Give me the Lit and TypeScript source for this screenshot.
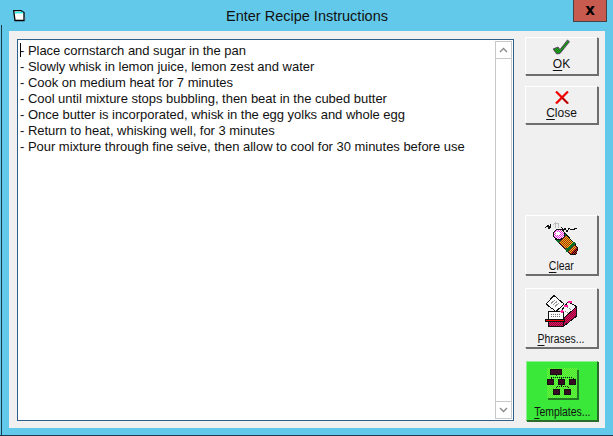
import { LitElement, css, html, svg } from 'lit';
import { customElement } from 'lit/decorators.js';

const STEPS = [
  '- Place cornstarch and sugar in the pan',
  '- Slowly whisk in lemon juice, lemon zest and water',
  '- Cook on medium heat for 7 minutes',
  '- Cool until mixture stops bubbling, then beat in the cubed butter',
  '- Once butter is incorporated, whisk in the egg yolks and whole egg',
  '- Return to heat, whisking well, for 3 minutes',
  '- Pour mixture through fine seive, then allow to cool for 30 minutes before use',
];

// 2x2 checker, the icons are old 16 colour bitmaps
const checker = (id: string, a: string, b: string) => svg`
  <pattern id=${id} width="2" height="2" patternUnits="userSpaceOnUse">
    <rect width="2" height="2" fill=${a}/>
    <rect width="1" height="1" fill=${b}/>
    <rect x="1" y="1" width="1" height="1" fill=${b}/>
  </pattern>`;

const okIcon = svg`<svg class="ico-ok" width="17" height="16" viewBox="0 0 17 16">
  <defs>${checker('okd', '#067a06', '#2aa82a')}</defs>
  <path d="M0 10 L5 8 L7 10.500 L14.500 1 L16.500 2.700 L7 14.500 L3.700 15 Z" fill="url(#okd)" stroke="#5a2a6a" stroke-width="0.8"/>
</svg>`;

const closeIcon = svg`<svg class="ico-close" width="14" height="13" viewBox="0 0 14 13">
  <path d="M1 0.500 L13 12.500" stroke="#f00000" stroke-width="2.200"/>
  <path d="M13 0.500 L1 12.500" stroke="#f00000" stroke-width="2.200"/>
  <path d="M7.500 7 L13 12.500" stroke="#5a1010" stroke-width="1"/>
</svg>`;

const clearIcon = svg`<svg width="33" height="33" viewBox="0 0 33 33" shape-rendering="crispEdges">
  <defs>
    ${checker('clb', '#f2c810', '#a01818')}
    ${checker('clm', '#e820d8', '#ffffff')}
    ${checker('clr', '#d02020', '#101010')}
  </defs>
  <path d="M0 6 L3 3.500 L4 7 L5.500 2.500 L6 6" fill="none" stroke="#111"/>
  <path d="M8 3 L10 1 L10 6 M10 2 L13 1.500 L13 6" fill="none" stroke="#bbb"/>
  <path d="M16.500 5 L18 9 L20 6 L22 10 L23.500 6.500 L27 8 L32 6" fill="none" stroke="#111"/>
  <path d="M20 11 L33 26 L31 32 L25 32 L10 17 Z" fill="url(#clb)" stroke="#111"/>
  <path d="M12 19.500 L20.500 11.500" stroke="#0b6a26" stroke-width="4"/>
  <path d="M21 29 L30 20.500" stroke="#0b6a26" stroke-width="3"/>
  <path d="M26 31.500 L32 26 L31.500 32 Z" fill="url(#clr)"/>
  <ellipse cx="14" cy="12.500" rx="5.600" ry="5.200" fill="url(#clm)" stroke="#111"/>
  <ellipse cx="13" cy="11.500" rx="2" ry="1.500" fill="#fff"/>
</svg>`;

const phrasesIcon = svg`<svg width="33" height="33" viewBox="0 0 33 33" shape-rendering="crispEdges">
  <defs>${checker('phb', '#e8105c', '#8a0a40')}</defs>
  <path d="M1 9 L9 0.500 L19 9 L11 16.500 Z" fill="#fff" stroke="#111"/>
  <path d="M6 8.500 L10 5 M8 10 L12 6.500 M10 11.500 L14 8" stroke="#999"/>
  <path d="M16 16 L23.300 6.700 L31.700 11.700 L20 25 Z" fill="#f4f4f4" stroke="#111"/>
  <path d="M22 12 L27 15 M20 16 L25 19" stroke="#888" stroke-dasharray="1 1"/>
  <path d="M31.700 11.700 V21 L18.300 31.500 V23.300 Z" fill="url(#phb)" stroke="#111"/>
  <path d="M3.300 26 V31.500 H18.300 V26 Z" fill="url(#phb)" stroke="#111"/>
  <rect x="3.500" y="16.500" width="15" height="7.500" fill="#fff" stroke="#111"/>
  <path d="M6 19.500 H16 M6 21.500 H16" stroke="#777" stroke-dasharray="1 1"/>
  <rect x="0.500" y="24.500" width="18.500" height="2" fill="#f00000" stroke="#111"/>
  <ellipse cx="25" cy="7" rx="2" ry="1.200" fill="#ff20a0"/>
  <ellipse cx="21" cy="11" rx="2" ry="1.200" fill="#ff20a0"/>
  <ellipse cx="17" cy="16.500" rx="2" ry="1.200" fill="#ff20a0"/>
</svg>`;

const templatesIcon = svg`<svg width="33" height="33" viewBox="0 0 33 33" shape-rendering="crispEdges">
  <defs>${checker('tpl', '#3ae83a', '#74f034')}</defs>
  <rect x="2" y="2" width="31" height="30" fill="#217a21"/>
  <rect x="1" y="0" width="30" height="30" fill="url(#tpl)"/>
  <path d="M5 9.500 H27 M10.500 7 V9 M5 10 V11 M15.500 10 V11 M27 10 V11 M15.500 17 V18 M10.500 18.500 H22 M10.500 19 V21 M22 19 V21"
    stroke="#111" stroke-width="1" stroke-dasharray="1 1" fill="none"/>
  <g fill="#3a0a24" stroke="#111">
    <rect x="4.500" y="1.500" width="11" height="5"/>
    <rect x="1.500" y="11.500" width="6" height="5"/>
    <rect x="12.500" y="11.500" width="6" height="5"/>
    <rect x="23.500" y="11.500" width="6" height="5"/>
    <rect x="7.500" y="21.500" width="6" height="5"/>
    <rect x="18.500" y="21.500" width="6" height="5"/>
  </g>
</svg>`;

@customElement('app-root')
export class AppRoot extends LitElement {
  static override styles = css`
    :host {
      display: block;
      width: 613px;
      height: 436px;
      font-family: 'Liberation Sans', Arial, sans-serif;
      color: #000;
    }

    .window {
      box-sizing: border-box;
      height: 436px;
      position: relative;
      display: flex;
      flex-direction: column;
      background: #63c9ea;
      border-bottom: 1px solid #1c3a4a;
      padding: 1px 8px 7px 9px;
    }

    /* the frame line only shows below the title bar on the left */
    .window::before {
      content: '';
      position: absolute;
      left: 1px;
      top: 25px;
      bottom: 0;
      width: 1px;
      background: #1c3a4a;
    }

    .titlebar {
      flex: none;
      height: 30px;
      display: flex;
      align-items: flex-start;
    }

    .sysicon {
      flex: none;
      margin: 9px 0 0 4px;
      width: 13px;
      height: 12px;
    }

    .title {
      flex: 1;
      text-align: center;
      font-size: 14.500px;
      line-height: 16px;
      padding: 7px 0 0 15px;
      color: #111;
    }

    .close-x {
      flex: none;
      box-sizing: border-box;
      width: 34px;
      height: 22px;
      margin: -1px -2px 0 0;
      background: #c75b50;
      border: 1px solid #444;
      border-top: none;
      font-family: 'DejaVu Sans', sans-serif;
      font-size: 15px;
      font-weight: bold;
      line-height: 20px;
      text-align: center;
    }

    .client {
      flex: 1;
      min-height: 0;
      background: #f0f0f0;
      display: flex;
      gap: 11px;
      padding: 6px 7px 6px 8px;
    }

    .memo {
      box-sizing: border-box;
      flex: none;
      width: 497px;
      margin: 2px 0 1px;
      display: flex;
      background: #fff;
      border: 1px solid #2e5f8a;
    }

    .text {
      flex: 1;
      padding: 3px 0 0 2px;
      font-size: 13px;
      line-height: 16px;
      letter-spacing: -0.025px;
      position: relative;
      color: #111;
    }

    .caret {
      position: absolute;
      left: 2px;
      top: 3px;
      width: 1px;
      height: 14px;
      background: #000;
    }

    .line {
      display: block;
      height: 16px;
      white-space: nowrap;
    }

    .scrollbar {
      flex: none;
      box-sizing: border-box;
      width: 17px;
      margin: 1px;
      display: flex;
      flex-direction: column;
      justify-content: space-between;
      background: #fff;
      border-left: 1px solid #c8c8c8;
      border-right: 1px solid #c8c8c8;
    }

    .arrow {
      height: 16px;
      display: flex;
      align-items: center;
      justify-content: center;
      border-top: 1px solid #c8c8c8;
      border-bottom: 1px solid #c8c8c8;
    }

    .buttons {
      flex: 1;
      display: flex;
      flex-direction: column;
    }

    .btn {
      box-sizing: border-box;
      flex: none;
      width: 73px;
      display: flex;
      flex-direction: column;
      align-items: center;
      background: #f0f0f0;
      border: 1px solid;
      border-color: #fff #6e6e6e #6e6e6e #fff;
      box-shadow: 1px 1px 0 #6e6e6e;
      font-size: 12px;
      line-height: 14px;
      color: #111;
    }

    .btn u {
      text-underline-offset: 2px;
    }

    .small {
      height: 38px;
    }

    .small .slot {
      height: 18px;
      padding-top: 1px;
    }

    .big {
      height: 60px;
    }

    .big .slot {
      height: 37px;
      padding-top: 6px;
    }

    .slot {
      flex: none;
      box-sizing: content-box;
      display: flex;
      justify-content: center;
    }

    .slot svg {
      display: block;
    }

    .ico-close {
      margin-top: 3px;
    }

    .narrow {
      display: inline-block;
      white-space: nowrap;
      transform: scaleX(0.87);
    }

    .ok {
      margin-bottom: 11px;
    }

    .close {
      margin-bottom: 91px;
    }

    .clear,
    .phrases {
      margin-bottom: 13px;
    }

    .templates {
      width: 72px;
      margin-left: 1px;
      background: #3ae83a;
      border-color: #8ef08e #2b6b2b #2b6b2b #8ef08e;
      box-shadow: 1px 1px 0 #2b6b2b;
    }
  `;

  override render() {
    return html`
      <div class="window">
        <div class="titlebar">
          <svg class="sysicon" viewBox="0 0 13 12">
            <path d="M0.700 0.700 H8 L11 2.500 V10.500 L2 10.500 Z" fill="#fff" stroke="#000" stroke-width="1.300"/>
            <path d="M2 2.600 H10" stroke="#2ee" stroke-width="1.600"/>
            <path d="M11.500 8.500 H13" stroke="#888"/>
          </svg>
          <div class="title">Enter Recipe Instructions</div>
          <div class="close-x">x</div>
        </div>
        <div class="client">
          <div class="memo">
            <div class="text">
              <span class="caret"></span>
              ${STEPS.map((s) => html`<span class="line">${s}</span>`)}
            </div>
            <div class="scrollbar">
              <div class="arrow">
                <svg width="9" height="6" viewBox="0 0 9 6"><path d="M1 5 L4.500 1.500 L8 5" fill="none" stroke="#888" stroke-width="1.300"/></svg>
              </div>
              <div class="arrow">
                <svg width="9" height="6" viewBox="0 0 9 6"><path d="M1 1 L4.500 4.500 L8 1" fill="none" stroke="#888" stroke-width="1.300"/></svg>
              </div>
            </div>
          </div>
          <div class="buttons">
            <div class="btn small ok"><div class="slot">${okIcon}</div><span><u>O</u>K</span></div>
            <div class="btn small close"><div class="slot">${closeIcon}</div><span><u>C</u>lose</span></div>
            <div class="btn big clear"><div class="slot">${clearIcon}</div><span class="narrow"><u>C</u>lear</span></div>
            <div class="btn big phrases"><div class="slot">${phrasesIcon}</div><span class="narrow"><u>P</u>hrases...</span></div>
            <div class="btn big templates"><div class="slot">${templatesIcon}</div><span class="narrow"><u>T</u>emplates...</span></div>
          </div>
        </div>
      </div>
    `;
  }
}
